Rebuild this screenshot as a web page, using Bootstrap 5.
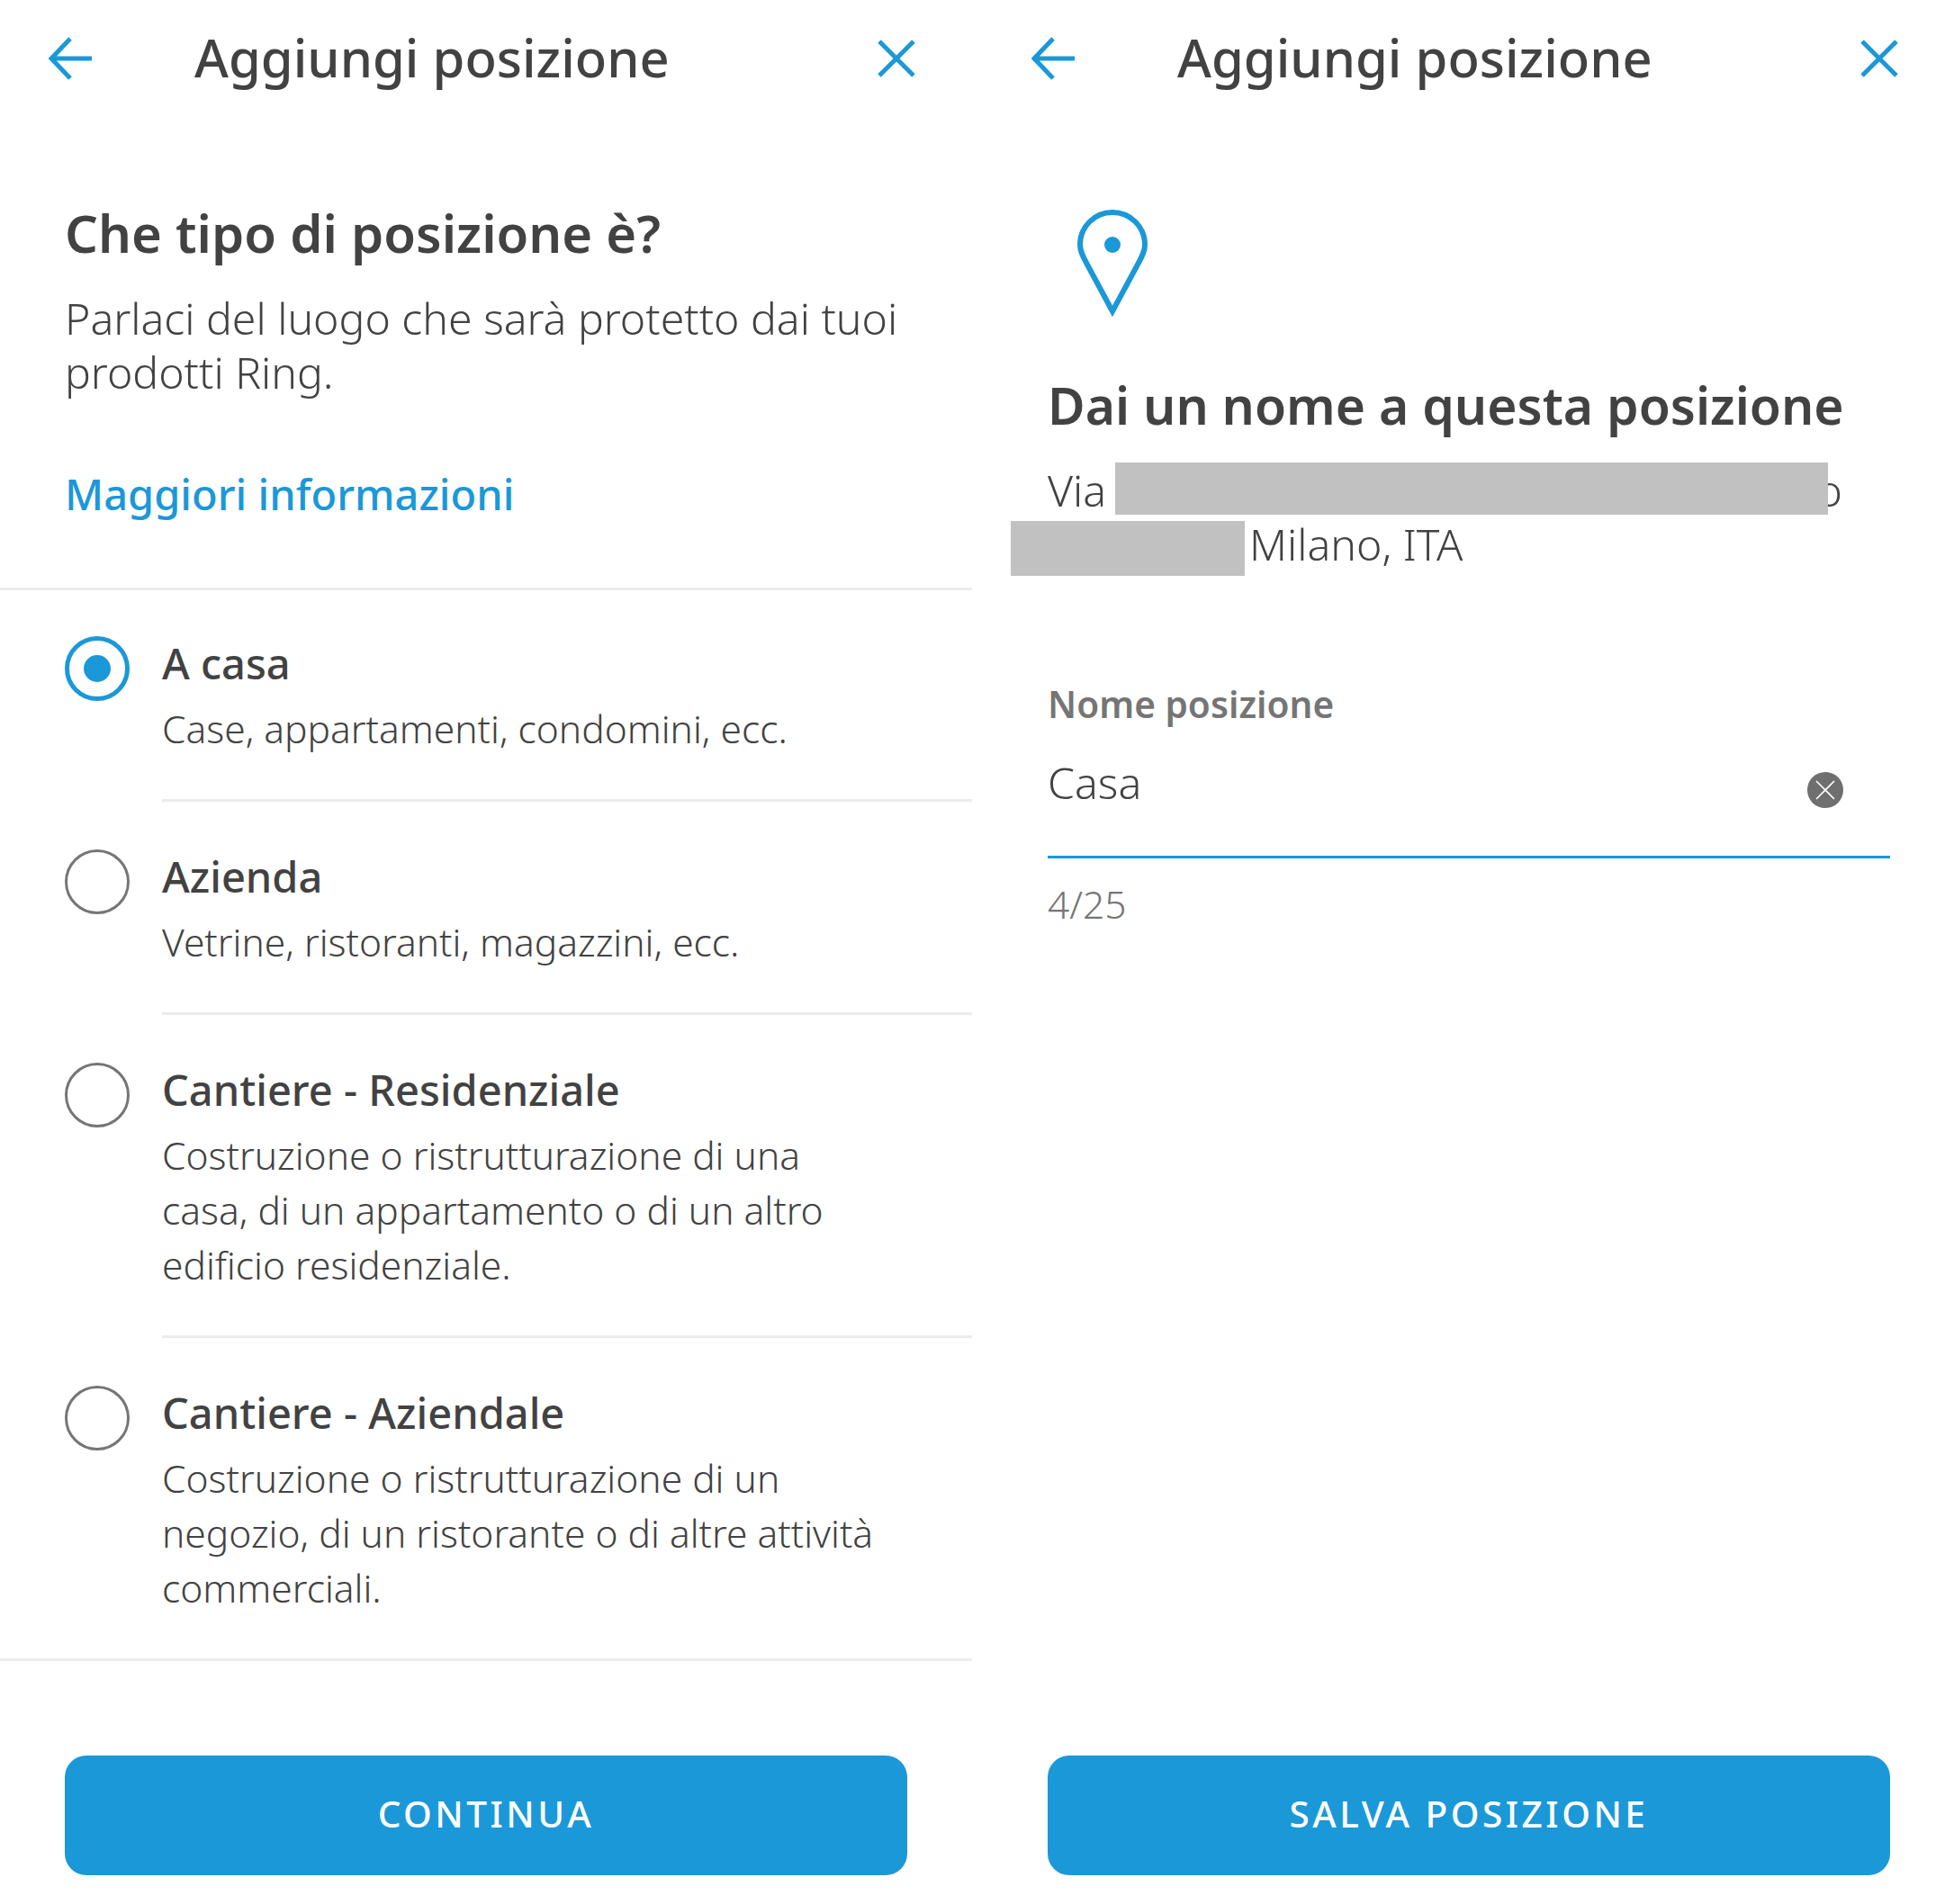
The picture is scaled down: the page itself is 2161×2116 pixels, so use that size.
<!DOCTYPE html>
<html lang="it">
<head>
  <meta charset="UTF-8">
  <meta name="viewport" content="width=device-width, initial-scale=1.0">
  <link href="https://cdn.jsdelivr.net/npm/bootstrap@5.3.0/dist/css/bootstrap.min.css" rel="stylesheet">
  <title>Aggiungi posizione</title>
  <style>
    body {
      background-color: #ffffff;
      color: #424242;
      font-family: "Noto Sans", sans-serif;
      overflow: hidden;
      height: 2116px;
    }

    .screens {
      width: 2172px;
      height: 2116px;
      gap: 12px;
    }

    .screen {
      width: 1080px;
      height: 2116px;
      flex: none;
    }

    .top-bar {
      height: 130px;
      padding: 0 63px 0 54px;
    }

    .top-title {
      font-size: 57.9px;
      font-weight: 500;
      line-height: 1;
      margin: 0 0 3px 114px;
    }

    .pane-head {
      padding: 92px 72px 0;
    }

    .pane-title {
      font-size: 58px;
      font-weight: 600;
      line-height: 74px;
      margin: 0 0 27px;
    }

    .pane-text {
      font-size: 48.2px;
      font-weight: 300;
      line-height: 60px;
      margin: 0;
    }

    .more-link {
      color: #1b98d8;
      font-size: 47px;
      font-weight: 500;
      line-height: 60px;
      text-decoration: none;
    }

    .more-wrap {
      margin: 76px 0 74px;
    }

    .rule-full {
      border-top: 3px solid #ececec;
    }

    .place-list {
      margin-top: -2px;
    }

    .place-row {
      padding: 0 0 0 72px;
      gap: 36px;
    }

    .place-body {
      flex: 1;
      padding-top: 53px;
      border-bottom: 3px solid #ececec;
    }

    .place-row:last-child .place-body {
      border-bottom: 0;
    }

    .place-name {
      font-size: 47px;
      font-weight: 500;
      line-height: 60px;
      margin: 0 0 12px;
    }

    .place-desc {
      font-size: 42.5px;
      font-weight: 300;
      line-height: 61px;
      margin: 0;
      max-width: 800px;
      padding-bottom: 48px;
    }

    .radio-dot {
      width: 72px;
      height: 72px;
      border: 3px solid #757575;
      border-radius: 50%;
      margin-top: 53px;
      flex: none;
    }

    .radio-dot.on {
      border: 5px solid #1b98d8;
    }

    .radio-dot.on::after {
      content: "";
      width: 30px;
      height: 30px;
      border-radius: 50%;
      background-color: #1b98d8;
    }

    .save-btn {
      width: 936px;
      height: 133px;
      margin: 0 72px 32px;
      padding: 0 0 2px;
      background-color: #1b98d8;
      border: 0;
      border-radius: 24px;
      color: #ffffff;
      font-size: 40.5px;
      font-weight: 500;
      letter-spacing: 3.5px;
    }

    .save-btn:hover {
      background-color: #1b98d8;
      color: #ffffff;
    }

    .pin-wrap {
      padding: 102px 72px 0 104px;
      line-height: 0;
    }

    .name-head {
      padding-top: 59px;
    }

    .name-head .pane-title {
      font-size: 57px;
    }

    .address {
      position: relative;
      padding: 0 125px 0 72px;
    }

    .redact {
      position: absolute;
      background-color: #c1c1c1;
    }

    .redact-a {
      left: 147px;
      top: 0;
      width: 792px;
      height: 58px;
    }

    .redact-b {
      left: 31px;
      top: 65px;
      width: 260px;
      height: 61px;
    }

    .address-city {
      padding-left: 224px;
    }

    .name-field {
      padding: 119px 72px 0;
    }

    .field-label {
      color: #757575;
      font-size: 40.6px;
      font-weight: 600;
      line-height: 60px;
    }

    .field-input {
      height: 141px;
      padding: 26px 52px 0 0;
      border-bottom: 3px solid #1b98d8;
      font-size: 48.2px;
      font-weight: 300;
      line-height: 60px;
    }

    .field-clear {
      width: 40px;
      height: 40px;
      margin: 19px 0 0;
      flex: none;
    }

    .field-count {
      color: #757575;
      font-size: 42.5px;
      font-weight: 300;
      line-height: 60px;
      margin-top: 21px;
    }
  </style>
</head>
<body>
  <div class="screens d-flex">

    <!-- Tipo di posizione -->
    <div class="screen d-flex flex-column">
      <div class="top-bar d-flex align-items-center">
        <svg width="48" height="48" viewBox="0 0 48 48" fill="none" stroke="#1b98d8" stroke-width="5"><path d="M48 24H3M24 2 3 24l21 22"/></svg>
        <h1 class="top-title flex-grow-1">Aggiungi posizione</h1>
        <svg width="42" height="42" viewBox="0 0 42 42" fill="none" stroke="#1b98d8" stroke-width="5"><path d="M2 2l38 38M40 2 2 40"/></svg>
      </div>

      <div class="pane-head">
        <h2 class="pane-title">Che tipo di posizione è?</h2>
        <p class="pane-text">Parlaci del luogo che sarà protetto dai tuoi prodotti Ring.</p>
        <div class="more-wrap"><a class="more-link" href="#">Maggiori informazioni</a></div>
      </div>
      <div class="rule-full"></div>

      <div class="place-list">
        <div class="place-row d-flex">
          <div class="radio-dot on d-flex align-items-center justify-content-center"></div>
          <div class="place-body">
            <p class="place-name">A casa</p>
            <p class="place-desc">Case, appartamenti, condomini, ecc.</p>
          </div>
        </div>
        <div class="place-row d-flex">
          <div class="radio-dot"></div>
          <div class="place-body">
            <p class="place-name">Azienda</p>
            <p class="place-desc">Vetrine, ristoranti, magazzini, ecc.</p>
          </div>
        </div>
        <div class="place-row d-flex">
          <div class="radio-dot"></div>
          <div class="place-body">
            <p class="place-name">Cantiere - Residenziale</p>
            <p class="place-desc">Costruzione o ristrutturazione di una casa, di un appartamento o di un altro edificio residenziale.</p>
          </div>
        </div>
        <div class="place-row d-flex">
          <div class="radio-dot"></div>
          <div class="place-body">
            <p class="place-name">Cantiere - Aziendale</p>
            <p class="place-desc">Costruzione o ristrutturazione di un negozio, di un ristorante o di altre attività commerciali.</p>
          </div>
        </div>
      </div>
      <div class="rule-full"></div>

      <button class="btn save-btn mt-auto" type="button">CONTINUA</button>
    </div>

    <!-- Nome posizione -->
    <div class="screen d-flex flex-column">
      <div class="top-bar d-flex align-items-center">
        <svg width="48" height="48" viewBox="0 0 48 48" fill="none" stroke="#1b98d8" stroke-width="5"><path d="M48 24H3M24 2 3 24l21 22"/></svg>
        <h1 class="top-title flex-grow-1">Aggiungi posizione</h1>
        <svg width="42" height="42" viewBox="0 0 42 42" fill="none" stroke="#1b98d8" stroke-width="5"><path d="M2 2l38 38M40 2 2 40"/></svg>
      </div>

      <div class="pin-wrap">
        <svg width="80" height="122" viewBox="0 0 80 122" fill="none"><path d="M40 114 12 62C7 53 4 47 4 40 4 20 20 4 40 4s36 16 36 36c0 7-3 13-8 22z" stroke="#1b98d8" stroke-width="6"/><circle cx="40" cy="40" r="9" fill="#1b98d8"/></svg>
      </div>

      <div class="pane-head name-head">
        <h2 class="pane-title">Dai un nome a questa posizione</h2>
      </div>
      <div class="address pane-text">
        <div class="d-flex justify-content-between"><span>Via</span><span>o</span></div>
        <div class="address-city">Milano, ITA</div>
        <div class="redact redact-a"></div>
        <div class="redact redact-b"></div>
      </div>

      <div class="name-field">
        <div class="field-label">Nome posizione</div>
        <div class="field-input d-flex justify-content-between">
          <span>Casa</span>
          <svg class="field-clear" viewBox="0 0 40 40"><circle cx="20" cy="20" r="20" fill="#6f6f6f"/><path d="M10 10l20 20M30 10 10 30" stroke="#fff" stroke-width="1.6" fill="none"/></svg>
        </div>
        <div class="field-count">4/25</div>
      </div>

      <button class="btn save-btn mt-auto" type="button">SALVA POSIZIONE</button>
    </div>

  </div>
  <script src="https://cdn.jsdelivr.net/npm/bootstrap@5.3.0/dist/js/bootstrap.bundle.min.js"></script>
</body>
</html>
